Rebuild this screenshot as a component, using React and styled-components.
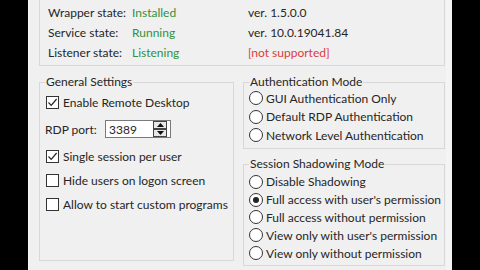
import React from 'react';
import styled, { createGlobalStyle } from 'styled-components';

const Global = createGlobalStyle`
  html, body { margin: 0; padding: 0; background: #000; }
  body { font-family: "Segoe UI", Lato, "Liberation Sans", sans-serif; }
`;

const Screen = styled.div`
  width: 480px;
  height: 270px;
  background: #000;
  display: flex;
  overflow: hidden;
`;

const Window = styled.div`
  margin-left: 28px;
  width: 424px;
  height: 270px;
  box-sizing: border-box;
  background: #f0f0f0;
  border-left: 1px solid #fafafa;
  border-right: 6px solid #f4f4f4;
  padding: 0 1px 0 10px;
  display: flex;
  flex-direction: column;
  font-size: 12px;
  color: #262626;
`;

const StatusBox = styled.div`
  height: 66px;
  box-sizing: border-box;
  border: 1px solid #d8d8d8;
  border-top: none;
  padding: 2px 0 0 8px;
  display: grid;
  grid-template-columns: 84px 116px 1fr;
  grid-auto-rows: 20px;
  align-items: center;
`;

const Cell = styled.span`
  white-space: nowrap;
  color: ${p => (p.$tone === 'ok' ? '#33913f' : p.$tone === 'bad' ? '#dc3b3b' : '#262626')};
`;

const Columns = styled.div`
  display: grid;
  grid-template-columns: 195px 1fr;
  column-gap: 9px;
  margin-top: 9px;
`;

const RightColumn = styled.div`
  display: flex;
  flex-direction: column;
  gap: 8px;
`;

const GroupBox = styled.fieldset`
  margin: 0;
  min-width: 0;
  box-sizing: border-box;
  height: ${p => p.$h}px;
  border: 1px solid #d8d8d8;
  padding: ${p => p.$pt || 0}px 0 0 5px;
`;

const Legend = styled.legend`
  padding: 0 1px;
  font-size: 12px;
  line-height: 14px;
  color: #262626;
`;

const CheckRow = styled.label`
  height: ${p => p.$h || 24}px;
  display: flex;
  align-items: center;
  gap: 4px;
  white-space: nowrap;
`;

const Box = styled.span`
  width: 13px;
  height: 13px;
  box-sizing: border-box;
  margin-left: 1px;
  border: 1px solid #333;
  background: #fff;
  display: flex;
  align-items: center;
  justify-content: center;
  flex: none;
`;

const PortLabel = styled.span`
  width: 56px;
`;

const SpinEdit = styled.div`
  width: 66px;
  height: 18px;
  box-sizing: border-box;
  border: 1px solid #7a7a7a;
  background: #fff;
  display: flex;
  align-items: center;
  justify-content: space-between;
  padding: 0 3px 0 3px;
`;

const SpinButtons = styled.div`
  display: flex;
  flex-direction: column;
`;

const SpinButton = styled.span`
  width: 12px;
  height: 6px;
  border: 1px solid #444;
  background: #e8e8e8;
  display: flex;
  align-items: center;
  justify-content: center;
`;

const RadioRow = styled.label`
  height: ${p => p.$h}px;
  display: flex;
  align-items: center;
  gap: 3px;
  white-space: nowrap;
`;

const RadioCircle = styled.span`
  width: 14px;
  height: 14px;
  box-sizing: border-box;
  border-radius: 50%;
  border: 1px solid #333;
  background: #fff;
  display: flex;
  align-items: center;
  justify-content: center;
  flex: none;
  &::after {
    content: '';
    width: 6px;
    height: 6px;
    border-radius: 50%;
    background: ${p => (p.$on ? '#222' : 'transparent')};
  }
`;

const Tick = () => (
  <svg width="11" height="11" viewBox="0 0 11 11">
    <polyline points="1.5,5.5 4.2,8.3 9.6,2" fill="none" stroke="#222" strokeWidth="1.2" />
  </svg>
);

const Arrow = ({ up }) => (
  <svg width="7" height="4" viewBox="0 0 7 4">
    <polygon points={up ? '3.5,0 7,4 0,4' : '0,0 7,0 3.5,4'} fill="#111" />
  </svg>
);

const Check = ({ on, children }) => (
  <CheckRow>
    <Box>{on && <Tick />}</Box>
    {children}
  </CheckRow>
);

const Radio = ({ on, h, children }) => (
  <RadioRow $h={h}>
    <RadioCircle $on={on} />
    {children}
  </RadioRow>
);

export default function App() {
  return (
    <>
      <Global />
      <Screen>
        <Window>
          <StatusBox>
            <Cell>Wrapper state:</Cell>
            <Cell $tone="ok">Installed</Cell>
            <Cell>ver. 1.5.0.0</Cell>
            <Cell>Service state:</Cell>
            <Cell $tone="ok">Running</Cell>
            <Cell>ver. 10.0.19041.84</Cell>
            <Cell>Listener state:</Cell>
            <Cell $tone="ok">Listening</Cell>
            <Cell $tone="bad">[not supported]</Cell>
          </StatusBox>
          <Columns>
            <GroupBox $h={186} $pt={1}>
              <Legend>General Settings</Legend>
              <Check on>Enable Remote Desktop</Check>
              <CheckRow as="div" $h={30}>
                <PortLabel>RDP port:</PortLabel>
                <SpinEdit>
                  <span>3389</span>
                  <SpinButtons>
                    <SpinButton><Arrow up /></SpinButton>
                    <SpinButton><Arrow /></SpinButton>
                  </SpinButtons>
                </SpinEdit>
              </CheckRow>
              <Check on>Single session per user</Check>
              <Check>Hide users on logon screen</Check>
              <Check>Allow to start custom programs</Check>
            </GroupBox>
            <RightColumn>
              <GroupBox $h={74}>
                <Legend>Authentication Mode</Legend>
                <Radio h={18.5}>GUI Authentication Only</Radio>
                <Radio h={18.5}>Default RDP Authentication</Radio>
                <Radio h={18.5}>Network Level Authentication</Radio>
              </GroupBox>
              <GroupBox $h={109} $pt={2}>
                <Legend>Session Shadowing Mode</Legend>
                <Radio h={17.8}>Disable Shadowing</Radio>
                <Radio h={17.8} on>Full access with user's permission</Radio>
                <Radio h={17.8}>Full access without permission</Radio>
                <Radio h={17.8}>View only with user's permission</Radio>
                <Radio h={17.8}>View only without permission</Radio>
              </GroupBox>
            </RightColumn>
          </Columns>
        </Window>
      </Screen>
    </>
  );
}
